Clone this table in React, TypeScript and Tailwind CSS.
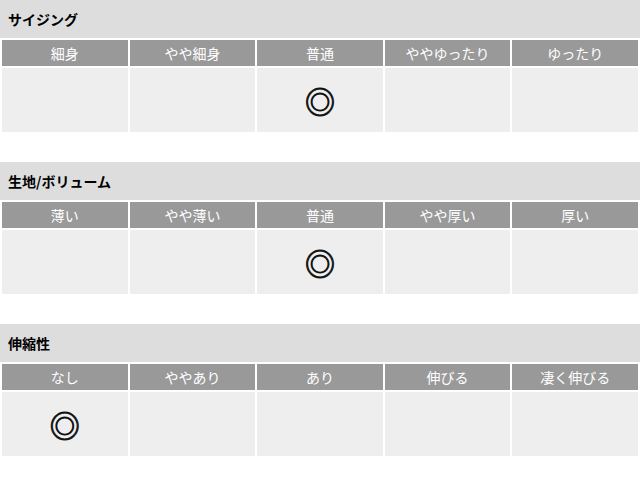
const sections = [
  { title: "サイジング", labels: ["細身", "やや細身", "普通", "ややゆったり", "ゆったり"], mark: 2 },
  { title: "生地/ボリューム", labels: ["薄い", "やや薄い", "普通", "やや厚い", "厚い"], mark: 2 },
  { title: "伸縮性", labels: ["なし", "ややあり", "あり", "伸びる", "凄く伸びる"], mark: 0 },
];

function Section({ title, labels, mark }: { title: string; labels: string[]; mark: number }) {
  return (
    <section className="mb-[30px]">
      <h2 className="flex h-[38px] items-center bg-[#dddddd] px-2 text-[14px] font-bold text-black">{title}</h2>
      <div className="grid grid-cols-5 gap-[2px] p-[2px] pb-0">
        {labels.map((l) => (
          <div key={l} className="flex h-[26px] items-center justify-center bg-[#999999] text-[14px] text-white">
            {l}
          </div>
        ))}
        {labels.map((l, i) => (
          <div key={l + "-v"} className="flex h-[64px] items-center justify-center bg-[#eeeeee] text-[30px] leading-none text-[#111111] [-webkit-text-stroke:0.9px_#111111]">
            {i === mark ? "◎" : ""}
          </div>
        ))}
      </div>
    </section>
  );
}

export default function App() {
  return (
    <div className="w-[640px] bg-white font-['Noto_Sans_CJK_JP','Noto_Sans',sans-serif]">
      {sections.map((s) => (
        <Section key={s.title} {...s} />
      ))}
    </div>
  );
}
